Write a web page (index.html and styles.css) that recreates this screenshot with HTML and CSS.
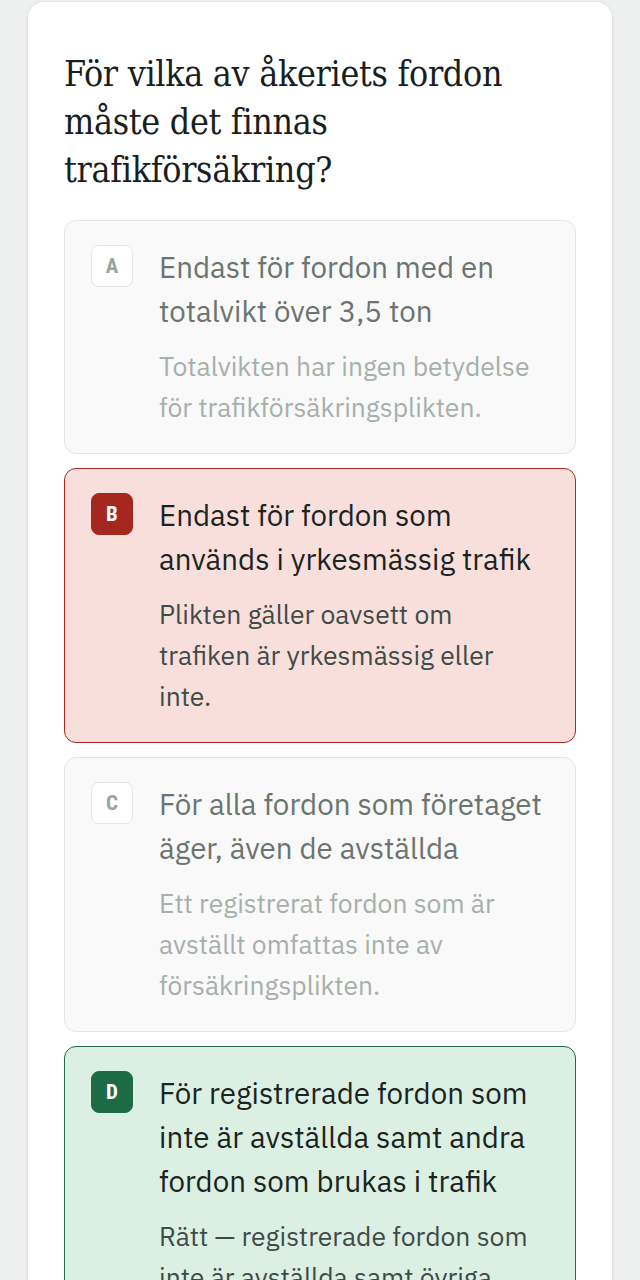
FILE: index.html
```html
<!DOCTYPE html>
<html lang="sv">
<head>
<meta charset="utf-8">
<link rel="stylesheet" href="styles.css">
</head>
<body>
<main class="card">
  <h1 class="question">För vilka av åkeriets fordon måste det finnas trafikförsäkring?</h1>
  <ol class="options">
    <li class="option option--dim">
      <span class="badge">A</span>
      <div class="body">
        <p class="answer">Endast för fordon med en totalvikt över 3,5 ton</p>
        <p class="note">Totalvikten har ingen betydelse för trafikförsäkringsplikten.</p>
      </div>
    </li>
    <li class="option option--wrong">
      <span class="badge">B</span>
      <div class="body">
        <p class="answer">Endast för fordon som används i yrkesmässig trafik</p>
        <p class="note">Plikten gäller oavsett om trafiken är yrkesmässig eller inte.</p>
      </div>
    </li>
    <li class="option option--dim">
      <span class="badge">C</span>
      <div class="body">
        <p class="answer">För alla fordon som företaget äger, även de avställda</p>
        <p class="note">Ett registrerat fordon som är avställt omfattas inte av försäkringsplikten.</p>
      </div>
    </li>
    <li class="option option--right">
      <span class="badge">D</span>
      <div class="body">
        <p class="answer">För registrerade fordon som inte är avställda samt andra fordon som brukas i trafik</p>
        <p class="note">Rätt — registrerade fordon som inte är avställda samt övriga fordon som brukas i trafik ska vara trafikförsäkrade.</p>
      </div>
    </li>
  </ol>
</main>
</body>
</html>
```

FILE: styles.css
```css
* { box-sizing: border-box; }
html, body { margin: 0; padding: 0; }
body {
  background: #eef0ef;
  font-family: "IBM Plex Sans", "Noto Sans", "Liberation Sans", sans-serif;
  color: #1a2421;
  padding: 2px 28px 0;
}
.card {
  background: #ffffff;
  border-radius: 16px;
  box-shadow: 0 0 0 1px #e2e5e3, 0 2px 8px rgba(0,0,0,0.04);
  padding: 48px 36px 40px;
  min-height: 1400px;
}
.question {
  margin: 0 0 26px;
  font-family: "DejaVu Serif Condensed", "DejaVu Serif", serif;
  font-weight: 400;
  font-size: 35.5px;
  line-height: 48px;
  letter-spacing: -0.3px;
  color: #17201d;
  padding-right: 30px;
}
.options {
  list-style: none;
  margin: 0;
  padding: 0;
  display: flex;
  flex-direction: column;
  gap: 14px;
}
.option {
  display: flex;
  gap: 26px;
  border: 1px solid #e3e6e4;
  border-radius: 12px;
  background: #f8f9f8;
  padding: 24px 28px 25px 26px;
}
.badge {
  flex: none;
  width: 42px;
  height: 42px;
  border-radius: 8px;
  display: flex;
  align-items: center;
  justify-content: center;
  font-family: "Roboto Condensed", "DejaVu Sans Condensed", "Liberation Sans Narrow", sans-serif;
  font-weight: 700;
  font-size: 21px;
  background: #ffffff;
  border: 1px solid #e3e6e4;
  color: #9aa39f;
}
.body { flex: 1; min-width: 0; }
.answer {
  margin: 0;
  font-size: 29.5px;
  line-height: 44px;
  color: #1a2421;
}
.note {
  margin: 13px 0 0;
  font-size: 26.5px;
  line-height: 41px;
  color: #3f4b47;
}
.option--dim .answer { color: #6b7470; }
.option--dim .note { color: #a7afab; }
.option--wrong {
  background: #f8dfdc;
  border-color: #a82a22;
}
.option--wrong .badge {
  background: #a52820;
  border-color: #a52820;
  color: #ffffff;
}
.option--right {
  background: #dcefe3;
  border-color: #1e6b45;
}
.option--right .badge {
  background: #1d6b45;
  border-color: #1d6b45;
  color: #ffffff;
}
```
